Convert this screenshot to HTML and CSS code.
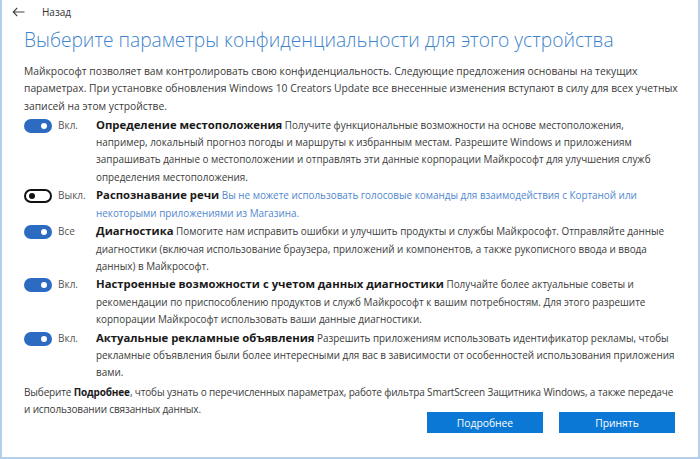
FILE: index.html
```html
<!DOCTYPE html>
<html lang="ru">
<head>
    <meta charset="UTF-8">
    <meta name="viewport" content="width=device-width, initial-scale=1.0">
    <title>Параметры конфиденциальности</title>
    <link rel="stylesheet" href="styles.css">
</head>
<body>

<div class="window">
    <!-- Верхняя панель -->
    <div class="topbar">
        <svg class="back" width="13" height="10" viewBox="0 0 13 10">
            <path d="M12.5 5H1.2M5.2 1L1.2 5l4 4" fill="none" stroke="#444" stroke-width="1.1"/>
        </svg>
        <span>Назад</span>
    </div>

    <div class="page">
        <h1>Выберите параметры конфиденциальности для этого устройства</h1>
        <p class="intro">Майкрософт позволяет вам контролировать свою конфиденциальность. Следующие предложения основаны на текущих<br>параметрах. При установке обновления Windows 10 Creators Update все внесенные изменения вступают в силу для всех учетных<br>записей на этом устройстве.</p>

        <!-- Список параметров -->
        <div class="options">
            <div class="option">
                <span class="toggle on"></span>
                <span class="state">Вкл.</span>
                <p class="text"><b>Определение местоположения</b> Получите функциональные возможности на основе местоположения,<br>например, локальный прогноз погоды и маршруты к избранным местам. Разрешите Windows и приложениям<br>запрашивать данные о местоположении и отправлять эти данные корпорации Майкрософт для улучшения служб<br>определения местоположения.</p>
            </div>
            <div class="option">
                <span class="toggle off"></span>
                <span class="state">Выкл.</span>
                <p class="text"><b>Распознавание речи</b> <span class="hint">Вы не можете использовать голосовые команды для взаимодействия с Кортаной или<br>некоторыми приложениями из Магазина.</span></p>
            </div>
            <div class="option">
                <span class="toggle on"></span>
                <span class="state">Все</span>
                <p class="text"><b>Диагностика</b> Помогите нам исправить ошибки и улучшить продукты и службы Майкрософт. Отправляйте данные<br>диагностики (включая использование браузера, приложений и компонентов, а также рукописного ввода и ввода<br>данных) в Майкрософт.</p>
            </div>
            <div class="option">
                <span class="toggle on"></span>
                <span class="state">Вкл.</span>
                <p class="text"><b>Настроенные возможности с учетом данных диагностики</b> Получайте более актуальные советы и<br>рекомендации по приспособлению продуктов и служб Майкрософт к вашим потребностям. Для этого разрешите<br>корпорации Майкрософт использовать ваши данные диагностики.</p>
            </div>
            <div class="option">
                <span class="toggle on"></span>
                <span class="state">Вкл.</span>
                <p class="text"><b>Актуальные рекламные объявления</b> Разрешить приложениям использовать идентификатор рекламы, чтобы<br>рекламные объявления были более интересными для вас в зависимости от особенностей использования приложения<br>вами.</p>
            </div>
        </div>

        <p class="note">Выберите <b>Подробнее</b>, чтобы узнать о перечисленных параметрах, работе фильтра SmartScreen Защитника Windows, а также передаче<br>и использовании связанных данных.</p>

        <div class="actions">
            <button class="button">Подробнее</button>
            <button class="button">Принять</button>
        </div>
    </div>
</div>

</body>
</html>
```

FILE: styles.css
```css
body {
    margin: 0;
    background-color: #fff;
    font-family: "Open Sans", "Noto Sans", sans-serif;
    color: #3a3a3a;
}
.window {
    box-sizing: border-box;
    width: 700px;
    height: 459px;
    overflow: hidden;
    border: 2px solid #b3cfeb;
    border-top: none;
}
.topbar {
    height: 24px;
    display: flex;
    align-items: center;
    padding-left: 10px;
    font-size: 10px;
    color: #333;
}
.back {
    margin-right: 17px;
}
.page {
    padding: 0 23px 0 22px;
}
h1 {
    margin: 2px 0 10px;
    font-size: 19.2px;
    line-height: 27px;
    font-weight: 300;
    color: #3d83cc;
}
.intro,
.text,
.note {
    margin: 0;
    line-height: 17.3px;
    white-space: nowrap;
}
.intro {
    margin-bottom: 2px;
    font-size: 10.3px;
}
.option {
    display: grid;
    grid-template-columns: 34px 38px 1fr;
    align-items: start;
    margin-bottom: 1.3px;
}
.toggle {
    position: relative;
    box-sizing: border-box;
    width: 28px;
    height: 14px;
    margin-top: 2px;
    border-radius: 7px;
    background-color: #2c6bc1;
}
.toggle::after {
    content: "";
    position: absolute;
    top: 4px;
    right: 5px;
    width: 6px;
    height: 6px;
    border-radius: 50%;
    background-color: #fff;
}
.toggle.off {
    background-color: #fff;
    border: 2px solid #111;
}
.toggle.off::after {
    top: 2px;
    left: 3px;
    right: auto;
    background-color: #111;
}
.state {
    font-size: 10px;
    line-height: 17.3px;
    color: #555;
}
.text {
    font-size: 9.9px;
}
.text b {
    font-size: 11.3px;
    line-height: 12px;
    color: #1a1a1a;
}
.hint {
    color: #5187cf;
}
.note {
    margin-top: 2px;
    font-size: 10px;
    letter-spacing: -0.15px;
}
.note b {
    line-height: 12px;
    color: #1a1a1a;
}
.actions {
    display: flex;
    justify-content: flex-end;
    gap: 16px;
    margin-top: -6px;
}
.button {
    width: 116px;
    height: 21px;
    border: none;
    background-color: #0a78d4;
    color: #fff;
    font-family: inherit;
    font-size: 10.3px;
    cursor: pointer;
}
```
